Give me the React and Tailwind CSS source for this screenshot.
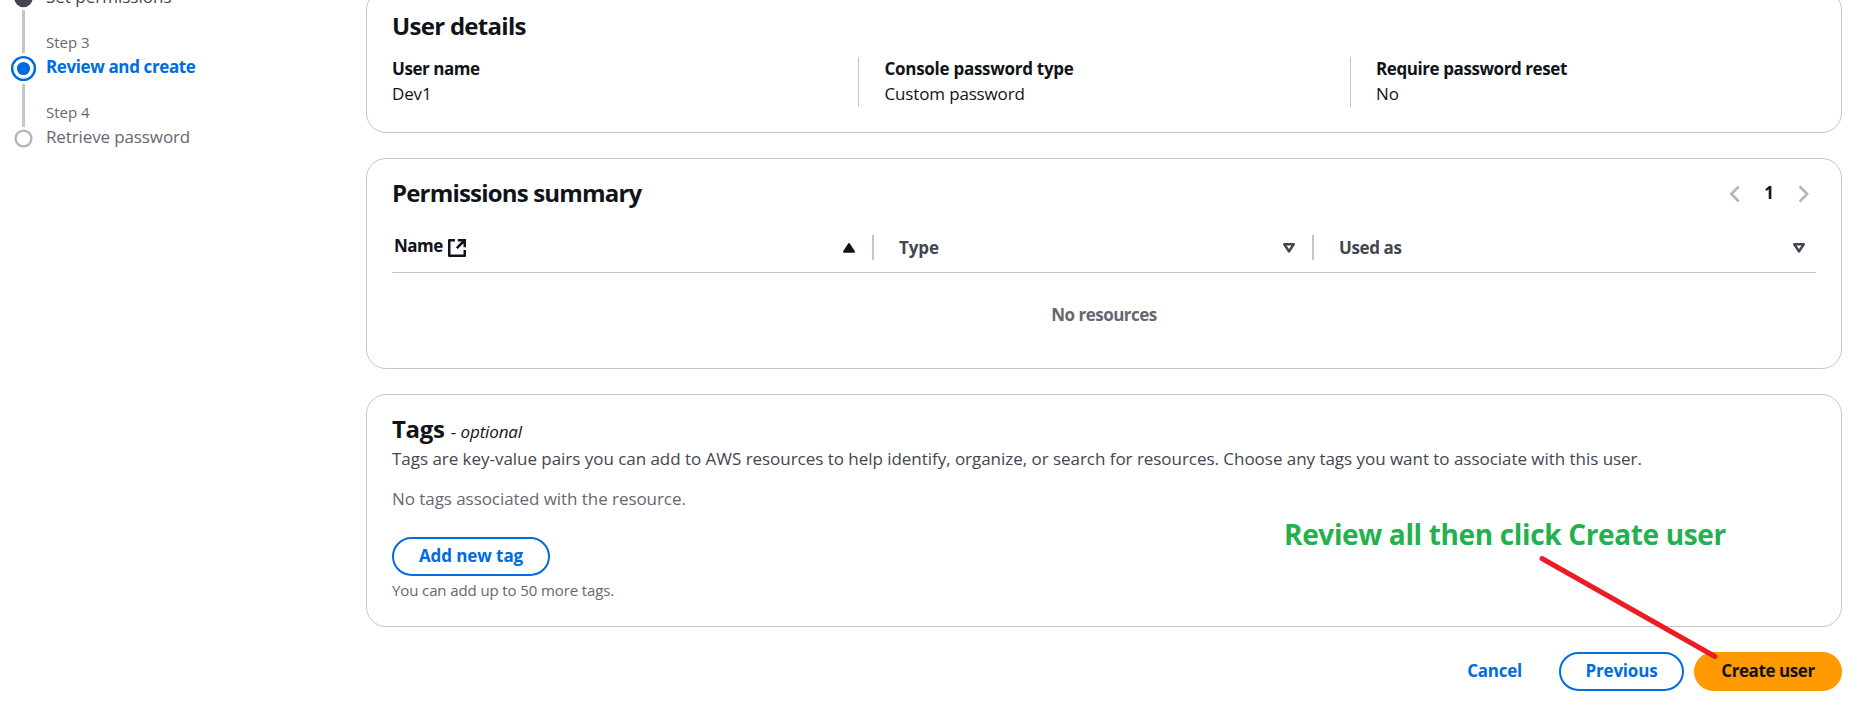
import React from "react";

function StepMarker({ state }) {
  if (state === "active") {
    return (
      <svg className="h-[31px] w-[31px] shrink-0" viewBox="0 0 31 31">
        <circle cx="15.5" cy="15.5" r="11.4" fill="none" stroke="#006ce0" strokeWidth="2.4" />
        <circle cx="15.5" cy="15.5" r="6.6" fill="#006ce0" />
      </svg>
    );
  }
  return (
    <svg className="h-[23px] w-[31px] shrink-0" viewBox="0 0 31 23">
      {state === "done" ? (
        <circle cx="15.5" cy="11" r="9.2" fill="#424650" />
      ) : (
        <circle cx="15.5" cy="11.5" r="7.9" fill="none" stroke="#b4b4bb" strokeWidth="2.4" />
      )}
    </svg>
  );
}

function Step({ label, state, last, children }) {
  return (
    <li className="flex h-[70px] gap-[7px]">
      <div className="flex w-[31px] flex-col items-center">
        <div className={state === "active" ? "h-5 w-[3px] shrink-0 bg-[#c6c6cd]" : "h-6 w-[3px] shrink-0 bg-[#c6c6cd]"} />
        <StepMarker state={state} />
        {!last && <div className="w-[3px] grow bg-[#c6c6cd]" />}
      </div>
      <div className="whitespace-nowrap">
        <div className="mb-0.5 text-[15px] leading-[19px] text-[#656871]">{label}</div>
        {children}
      </div>
    </li>
  );
}

function Card({ className, children }) {
  return (
    <section className={"rounded-[20px] border border-[#c6c6cd] bg-white px-[25px] " + className}>{children}</section>
  );
}

function Detail({ label, value, className }) {
  return (
    <div className={"h-[50px] " + className}>
      <div className="-mt-px">{label}</div>
      <div className="tracking-[-0.15px]">{value}</div>
    </div>
  );
}

function SortIcon({ filled }) {
  return filled ? (
    <svg className="h-3 w-[14px]" viewBox="0 0 14 12">
      <path d="M7 2 L12 9.8 H2 Z" fill="#0f141a" stroke="#0f141a" strokeWidth="2" strokeLinejoin="round" />
    </svg>
  ) : (
    <svg className="h-3 w-[14px]" viewBox="0 0 14 12">
      <path d="M2.3 2.2 H11.7 L7 9.4 Z" fill="none" stroke="#424650" strokeWidth="2.5" strokeLinejoin="round" />
    </svg>
  );
}

function ExternalIcon() {
  return (
    <svg className="block h-5 w-5" viewBox="0 0 20 20" fill="none" stroke="#0f141a" strokeWidth="2.5">
      <path d="M8 2.25 H2.25 V17.75 H17.75 V12" strokeLinejoin="round" />
      <path d="M10.8 2.25 H17.75 V9.2 M17.5 2.5 L9.8 10.2" />
    </svg>
  );
}

function Chevron({ d }) {
  return (
    <svg className="mt-px h-5 w-3" viewBox="0 0 12 20" fill="none" stroke="#b4b4bb" strokeWidth="2.5">
      <path d={d} />
    </svg>
  );
}

export default function App() {
  return (
    <div className="relative flex h-[710px] w-[1861px] overflow-hidden bg-white font-['Open_Sans','Noto_Sans',sans-serif] text-[17px] leading-[25px] text-[#0f141a]">
      <nav className="w-[366px] shrink-0 pl-2">
        <ol className="-mt-[37px]">
          <Step label="Step 2" state="done">
            <div className="text-[#424650]">Set permissions</div>
          </Step>
          <Step label="Step 3" state="active">
            <div className="font-bold tracking-[-0.38px] text-[#006ce0]">Review and create</div>
          </Step>
          <Step label="Step 4" state="todo" last>
            <div className="tracking-[-0.12px] text-[#656871]">Retrieve password</div>
          </Step>
        </ol>
      </nav>

      <main className="w-[1476px] whitespace-nowrap">
        <Card className="-mt-[10px] h-[143px]">
          <h2 className="pt-[20px] text-[24px] leading-[30px] font-bold tracking-[-0.7px]">User details</h2>
          <div className="mt-[16px] flex">
            <Detail
              className="w-[466px]"
              label={<span className="font-bold tracking-[-0.45px]">User name</span>}
              value="Dev1"
            />
            <Detail
              className="w-[492px] border-l border-[#c6c6cd] pl-[25.5px]"
              label={<span className="font-bold tracking-[-0.28px]">Console password type</span>}
              value="Custom password"
            />
            <Detail
              className="border-l border-[#c6c6cd] pl-[25px]"
              label={<span className="font-bold tracking-[-0.42px]">Require password reset</span>}
              value="No"
            />
          </div>
        </Card>

        <Card className="mt-[25px] h-[211px]">
          <div className="flex items-center justify-between pt-[19px]">
            <h2 className="text-[24px] leading-[30px] font-bold tracking-[-0.82px]">Permissions summary</h2>
            <div className="flex items-center pr-[6px]">
              <Chevron d="M10.8 2.5 L3.3 10 L10.8 17.5" />
              <span className="w-[58px] pb-px text-center font-bold">1</span>
              <Chevron d="M1.7 2.5 L9.2 10 L1.7 17.5" />
            </div>
          </div>
          <div className="mt-[27px] flex h-[38px] border-b border-[#c6c6cd] font-bold">
            <div className="flex h-[25px] w-[482px] items-center border-r-2 border-[#c6c6cd] pr-[16px] pl-[2px]">
              <span className="-mt-1 tracking-[-0.5px]">Name</span>
              <span className="ml-[4px]"><ExternalIcon /></span>
              <span className="ml-auto"><SortIcon filled /></span>
            </div>
            <div className="flex h-[25px] w-[440px] items-center border-r-2 border-[#c6c6cd] pr-[16px] pl-[25px] text-[#424650]">
              <span className="tracking-[-0.1px]">Type</span>
              <span className="ml-auto"><SortIcon /></span>
            </div>
            <div className="flex h-[25px] grow items-center pr-[10px] pl-[25px] text-[#424650]">
              <span className="tracking-[-0.4px]">Used as</span>
              <span className="ml-auto"><SortIcon /></span>
            </div>
          </div>
          <p className="mt-[29px] text-center font-bold tracking-[-0.5px] text-[#656871]">No resources</p>
        </Card>

        <Card className="mt-[25px] h-[233px] pt-[19px]">
          <div className="flex h-[30px] items-baseline gap-[6px] leading-[30px]">
            <h2 className="text-[24px] font-bold tracking-[-0.3px]">Tags</h2>
            <span>
              - <i className="tracking-[-0.15px]">optional</i>
            </span>
          </div>
          <p className="mt-0.5 tracking-[-0.035px] text-[#424650]">
            Tags are key-value pairs you can add to AWS resources to help identify, organize, or search for resources.
            Choose any tags you want to associate with this user.
          </p>
          <p className="mt-[15px] tracking-[-0.06px] text-[#656871]">No tags associated with the resource.</p>
          <button className="mt-[26px] flex h-[39px] w-[158px] items-center justify-center rounded-full border-2 border-[#006ce0] pb-0.5 font-bold tracking-[-0.08px] text-[#006ce0]">
            Add new tag
          </button>
          <p className="mt-[4px] text-[15px] leading-5 tracking-[-0.11px] text-[#656871]">
            You can add up to 50 more tags.
          </p>
        </Card>

        <div className="mt-[25px] flex h-[39px] items-center justify-end font-bold">
          <button className="mr-[37px] pb-[3px] tracking-[-0.25px] text-[#006ce0]">Cancel</button>
          <button className="mr-[10px] h-[39px] w-[125px] rounded-full border-2 border-[#006ce0] pb-[3px] tracking-[-0.2px] text-[#006ce0]">
            Previous
          </button>
          <button className="h-[39px] w-[148px] rounded-full bg-[#ff9900] pb-[3px] tracking-[-0.42px]">Create user</button>
        </div>
      </main>

      <div className="absolute top-[515px] left-[1284px] text-[28px] leading-[38px] font-bold tracking-[-0.35px] whitespace-nowrap text-[#22b14c]">
        Review all then click Create user
      </div>
      <svg className="absolute top-[550px] left-[1530px] h-[115px] w-[200px]" viewBox="0 0 200 115">
        <path d="M12 8.5 L185 106.5" stroke="#ed1c24" strokeWidth="5" strokeLinecap="round" />
      </svg>
    </div>
  );
}
